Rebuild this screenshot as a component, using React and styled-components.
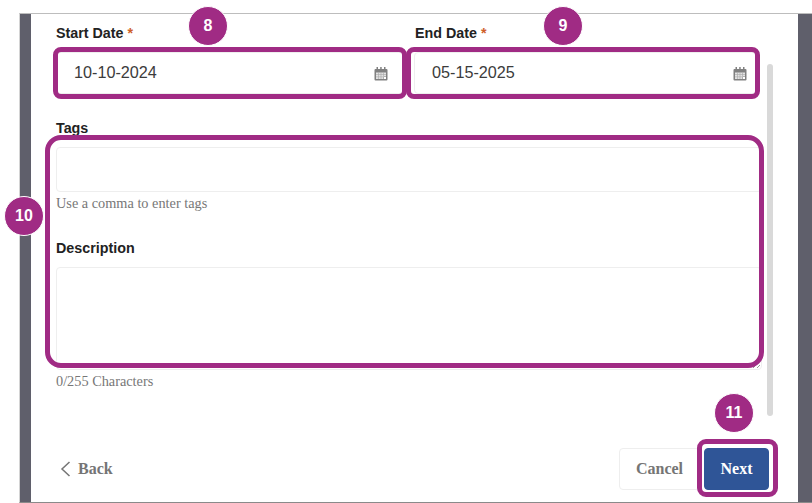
import React from "react";
import styled, { createGlobalStyle } from "styled-components";

const GlobalStyle = createGlobalStyle`
  html, body {
    margin: 0;
    padding: 0;
    background: #fff;
  }
  body {
    font-family: "Liberation Sans", Arial, sans-serif;
    overflow: hidden;
  }
`;

const Screen = styled.div`
  position: relative;
  width: 812px;
  height: 503px;
  padding: 13px 0 0 19px;
  box-sizing: border-box;
  overflow: hidden;
`;

const Backdrop = styled.div`
  height: 490px;
  box-sizing: border-box;
  padding: 0 14px 0 11px;
  background: #5f5f6b;
  border-top: 1px solid #bdbdbd;
  border-left: 1px solid #d4d4d4;
  border-bottom: 1px solid #8a8a8a;
`;

const Panel = styled.div`
  display: flex;
  flex-direction: column;
  height: 100%;
  box-sizing: border-box;
  padding: 11px 29px 11px 25px;
  background: #fff;
`;

const DateRow = styled.div`
  display: flex;
  gap: 10px;
  width: 701px;
`;

const DateField = styled.div`
  width: ${(p) => p.$width}px;
`;

const Label = styled.div`
  height: 17px;
  margin: ${(p) => p.$top || 0}px 0 10px ${(p) => p.$left || 0}px;
  font-size: 14.3px;
  line-height: 17px;
  font-weight: 700;
  color: #222;
`;

const Required = styled.span`
  color: #cf5f2a;
`;

const DateInput = styled.div`
  display: flex;
  align-items: center;
  justify-content: space-between;
  height: 42px;
  box-sizing: border-box;
  padding: 0 ${(p) => p.$endPad}px 2px 17px;
  border: 1px solid #eeeeee;
  border-radius: 4px;
  font-size: 16.2px;
  color: #3c3c3c;
`;

const CalendarSvg = styled.svg`
  width: 14px;
  height: 14px;
  margin-top: 4px;
`;

const TextBox = styled.div`
  position: relative;
  width: 706px;
  height: ${(p) => p.$height}px;
  box-sizing: border-box;
  border: 1px solid #eeeeee;
  border-radius: 4px;
`;

const Hint = styled.div`
  margin-top: 3px;
  font-family: "Liberation Serif", "Times New Roman", serif;
  font-size: 14.3px;
  line-height: 16px;
  color: #777;
`;

const ResizeGrip = styled.svg`
  position: absolute;
  right: 1px;
  bottom: 1px;
  width: 8px;
  height: 8px;
`;

const Footer = styled.div`
  display: flex;
  align-items: center;
  justify-content: space-between;
  margin-top: auto;
  padding-bottom: 1px;
`;

const BackButton = styled.button`
  display: flex;
  align-items: center;
  gap: 7px;
  padding: 0 0 0 4px;
  border: 0;
  background: none;
  font-family: "Liberation Serif", "Times New Roman", serif;
  font-size: 16px;
  font-weight: 700;
  color: #757575;
`;

const Actions = styled.div`
  display: flex;
  gap: 4px;
`;

const ActionButton = styled.button`
  height: 42px;
  width: ${(p) => p.$width}px;
  box-sizing: border-box;
  padding: 0;
  border: 1px solid ${(p) => (p.$primary ? "#2f5597" : "#eeeeee")};
  border-radius: 4px;
  background: ${(p) => (p.$primary ? "#2f5597" : "#fff")};
  font-family: "Liberation Serif", "Times New Roman", serif;
  font-size: 16px;
  font-weight: 700;
  color: ${(p) => (p.$primary ? "#fff" : "#757575")};
`;

const Scrollbar = styled.div`
  position: absolute;
  left: 767px;
  top: 64px;
  width: 6px;
  height: 352px;
  border-radius: 3px;
  background: #d9d9d9;
`;

const Ring = styled.div`
  position: absolute;
  left: ${(p) => p.$x}px;
  top: ${(p) => p.$y}px;
  width: ${(p) => p.$w}px;
  height: ${(p) => p.$h}px;
  box-sizing: border-box;
  border: 5px solid #a02b84;
  border-radius: ${(p) => p.$r}px;
  pointer-events: none;
`;

const Badge = styled.div`
  position: absolute;
  left: ${(p) => p.$x - 20}px;
  top: ${(p) => p.$y - 20}px;
  display: flex;
  align-items: center;
  justify-content: center;
  width: 40px;
  height: 40px;
  box-sizing: border-box;
  border: 1px solid #fff;
  border-radius: 50%;
  background: #a02b84;
  font-size: 16px;
  font-weight: 700;
  color: #fff;
`;

const CalendarIcon = () => (
  <CalendarSvg viewBox="0 0 14 14">
    <path fill="#808080" d="M1.500 2h11a1 1 0 0 1 1 1v9.500a1 1 0 0 1-1 1h-11a1 1 0 0 1-1-1V3a1 1 0 0 1 1-1z" />
    <path fill="#e2e2e2" d="M2 5.500h10v4H9.500V12H2z" />
    <path fill="#808080" d="M2.500 0h1.500v3.500H2.500zM6.200 0h1.500v3.500H6.200zM10 0h1.500v3.500H10z" />
    <path stroke="#a8a8a8" strokeWidth=".6" d="M4.500 5.500V12M7 5.500V12M9.500 5.500v4M2 7.500h10M2 9.800h7.500" />
    <path fill="#fff" d="M10 10h2v2h-2z" />
  </CalendarSvg>
);

const App = () => {
  return (
    <Screen>
      <GlobalStyle />
      <Backdrop>
        <Panel>
          <DateRow>
            <DateField $width={348}>
              <Label>
                Start Date <Required>*</Required>
              </Label>
              <DateInput $endPad={15}>
                10-10-2024
                <CalendarIcon />
              </DateInput>
            </DateField>
            <DateField $width={343}>
              <Label $left={1}>
                End Date <Required>*</Required>
              </Label>
              <DateInput $endPad={9}>
                05-15-2025
                <CalendarIcon />
              </DateInput>
            </DateField>
          </DateRow>

          <Label $top={26}>Tags</Label>
          <TextBox $height={45} />
          <Hint>Use a comma to enter tags</Hint>

          <Label $top={29}>Description</Label>
          <TextBox $height={103}>
            <ResizeGrip viewBox="0 0 8 8">
              <path stroke="#999" strokeWidth="1" d="M1 8l7-7M5 8l3-3" />
            </ResizeGrip>
          </TextBox>
          <Hint>0/255 Characters</Hint>

          <Footer>
            <BackButton>
              <svg width="11" height="16" viewBox="0 0 11 16" fill="none">
                <path d="M9.500 1L2 8l7.500 7" stroke="#757575" strokeWidth="1.500" />
              </svg>
              Back
            </BackButton>
            <Actions>
              <ActionButton $width={81}>Cancel</ActionButton>
              <ActionButton $width={65} $primary>
                Next
              </ActionButton>
            </Actions>
          </Footer>
        </Panel>
      </Backdrop>

      <Scrollbar />

      <Ring $x={53} $y={47} $w={354} $h={52} $r={8} />
      <Ring $x={406} $y={47} $w={354} $h={52} $r={8} />
      <Ring $x={45} $y={135} $w={719} $h={233} $r={16} />
      <Ring $x={697} $y={439} $w={81} $h={58} $r={9} />

      <Badge $x={208} $y={26}>8</Badge>
      <Badge $x={563} $y={26}>9</Badge>
      <Badge $x={24} $y={216}>10</Badge>
      <Badge $x={734} $y={413}>11</Badge>
    </Screen>
  );
};

export default App;
